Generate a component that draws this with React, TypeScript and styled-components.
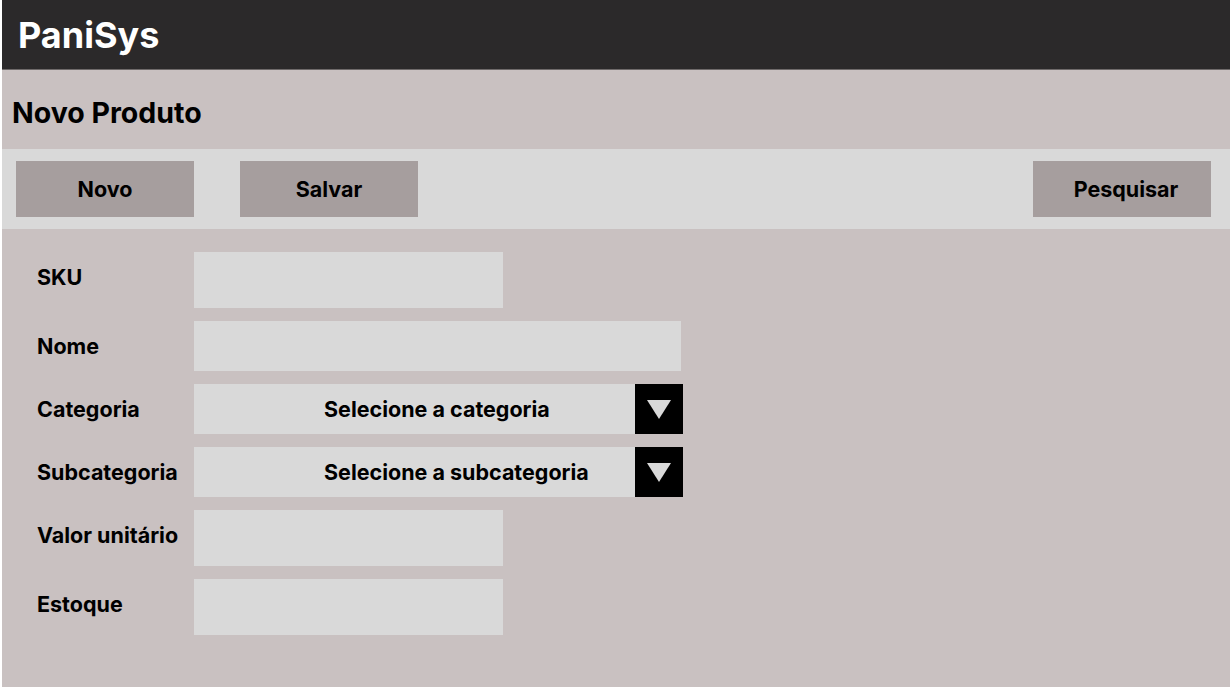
import React, { useState } from 'react';
import styled, { createGlobalStyle } from 'styled-components';

const GlobalStyle = createGlobalStyle`
    html, body {
        margin: 0;
        padding: 0;
        background: #ffffff;
    }

    body {
        font-family: Inter, 'Liberation Sans', Arial, sans-serif;
    }

    #root {
        padding-left: 2px;
    }
`;

interface FieldRow {
    label: string;
    kind: 'short' | 'long' | 'select';
    placeholder?: string;
    tall?: boolean;
}

const rows: FieldRow[] = [
    { label: 'SKU', kind: 'short', tall: true },
    { label: 'Nome', kind: 'long' },
    { label: 'Categoria', kind: 'select', placeholder: 'Selecione a categoria' },
    { label: 'Subcategoria', kind: 'select', placeholder: 'Selecione a subcategoria' },
    { label: 'Valor unitário', kind: 'short', tall: true },
    { label: 'Estoque', kind: 'short', tall: true },
];

const App: React.FC = () => {
    const [values, setValues] = useState<Record<string, string>>({});

    const handleChange = (key: string) => (e: React.ChangeEvent<HTMLInputElement>) => {
        setValues({ ...values, [key]: e.target.value });
    };

    return (
        <>
            <GlobalStyle />
            <StyledFrame>
                <StyledHeader>
                    <h1>PaniSys</h1>
                </StyledHeader>
                <StyledPageTitle>Novo Produto</StyledPageTitle>
                <StyledToolbar>
                    <StyledButton>Novo</StyledButton>
                    <StyledButton>Salvar</StyledButton>
                    <StyledSpacer />
                    <StyledButton $nudge={8}>Pesquisar</StyledButton>
                </StyledToolbar>
                <StyledForm>
                    {rows.map((row) => (
                        <StyledRow key={row.label}>
                            <label>{row.label}</label>
                            {row.kind === 'select' ? (
                                <StyledSelect>
                                    <span>{row.placeholder}</span>
                                    <StyledArrow>
                                        <svg width='24' height='19' viewBox='0 0 24 19'>
                                            <polygon points='0,0 24,0 12,19' fill='#d9d9d9' />
                                        </svg>
                                    </StyledArrow>
                                </StyledSelect>
                            ) : (
                                <StyledField
                                    $wide={row.kind === 'long'}
                                    $tall={row.tall}
                                    value={values[row.label] || ''}
                                    onChange={handleChange(row.label)}
                                />
                            )}
                        </StyledRow>
                    ))}
                </StyledForm>
            </StyledFrame>
        </>
    );
};

const StyledFrame = styled.div`
    display: flex;
    flex-direction: column;
    height: 687px;
    background: #c9c1c1;
    color: #000;
`;

const StyledHeader = styled.header`
    height: 70px;
    flex-shrink: 0;
    display: flex;
    align-items: center;
    padding-left: 16px;
    background: #2b292a;
    box-sizing: border-box;
    border-bottom: 1px solid #6f6a6a;

    & h1 {
        margin: 0;
        color: #fff;
        font-size: 36px;
        font-weight: 700;
    }
`;

const StyledPageTitle = styled.h2`
    margin: 0;
    height: 79px;
    display: flex;
    align-items: center;
    padding: 6px 0 0 10px;
    box-sizing: border-box;
    font-size: 28.5px;
    font-weight: 700;
`;

const StyledToolbar = styled.div`
    height: 80px;
    display: flex;
    align-items: center;
    column-gap: 46px;
    padding: 0 19px 0 14px;
    box-sizing: border-box;
    background: #d9d9d9;
`;

const StyledSpacer = styled.div`
    flex: 1;
`;

const StyledButton = styled.button<{ $nudge?: number }>`
    width: 178px;
    height: 56px;
    border: none;
    background: #a69e9e;
    font-family: inherit;
    font-size: 21.5px;
    font-weight: 700;
    color: #000;
    padding: 0 0 0 ${(p) => p.$nudge || 0}px;
`;

const StyledForm = styled.div`
    display: flex;
    flex-direction: column;
    row-gap: 13px;
    padding: 23px 0 0 35px;
`;

const StyledRow = styled.div`
    display: flex;
    align-items: flex-start;

    & label {
        width: 157px;
        height: 50px;
        line-height: 50px;
        font-size: 21.5px;
        font-weight: 700;
        white-space: nowrap;
    }
`;

const StyledField = styled.input<{ $wide?: boolean; $tall?: boolean }>`
    width: ${(p) => (p.$wide ? '487px' : '309px')};
    height: ${(p) => (p.$tall ? '56px' : '50px')};
    box-sizing: border-box;
    border: none;
    outline: none;
    background: #d9d9d9;
    font-family: inherit;
    font-size: 18px;
    padding: 0 12px;
`;

const StyledSelect = styled.div`
    width: 489px;
    height: 50px;
    display: flex;
    background: #d9d9d9;
    font-size: 21.5px;
    font-weight: 700;

    & span {
        flex: 1;
        display: flex;
        align-items: center;
        padding-left: 130px;
        white-space: nowrap;
    }
`;

const StyledArrow = styled.div`
    width: 48px;
    height: 50px;
    display: flex;
    align-items: center;
    justify-content: center;
    background: #000;
`;

export default App;
